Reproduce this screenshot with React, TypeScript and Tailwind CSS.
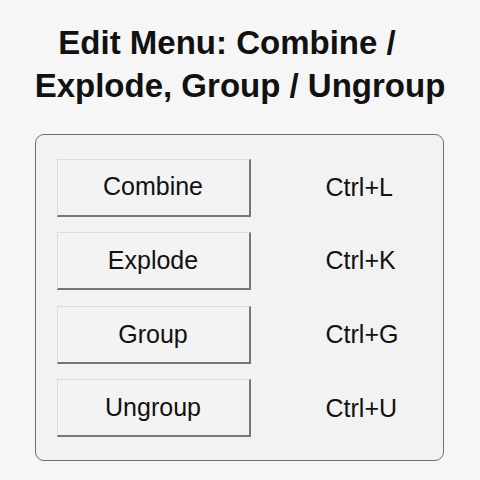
import React from "react";

const rows = [
  { label: "Combine", key: "Ctrl+L" },
  { label: "Explode", key: "Ctrl+K" },
  { label: "Group", key: "Ctrl+G" },
  { label: "Ungroup", key: "Ctrl+U" },
];

export default function App() {
  return (
    <div
      className="w-[480px] h-[480px] bg-[#f6f6f6] text-[#111] overflow-hidden"
      style={{ fontFamily: '"Liberation Sans", Arial, sans-serif' }}
    >
      <div className="pt-[21px] text-center font-bold text-[33px] leading-[43px]">
        <div className="pr-[26px]">Edit Menu: Combine /</div>
        <div>Explode, Group / Ungroup</div>
      </div>
      <div className="ml-[35px] mt-[27px] w-[409px] h-[327px] rounded-[9px] border-[1.5px] border-[#707070] bg-[#f2f2f2] pt-[23.5px] pl-[20.5px] flex flex-col gap-[15.67px]">
        {rows.map((r) => (
          <div key={r.label} className="flex items-center">
            <div className="w-[194px] h-[58px] flex items-center justify-center bg-[#f3f3f3] border-t border-l border-t-[#dcdcdc] border-l-[#dcdcdc] border-r-2 border-b-2 border-r-[#767676] border-b-[#767676] text-[25px] text-[#111]">
              {r.label}
            </div>
            <div className="ml-[75px] text-[25px] text-[#111]">{r.key}</div>
          </div>
        ))}
      </div>
    </div>
  );
}
